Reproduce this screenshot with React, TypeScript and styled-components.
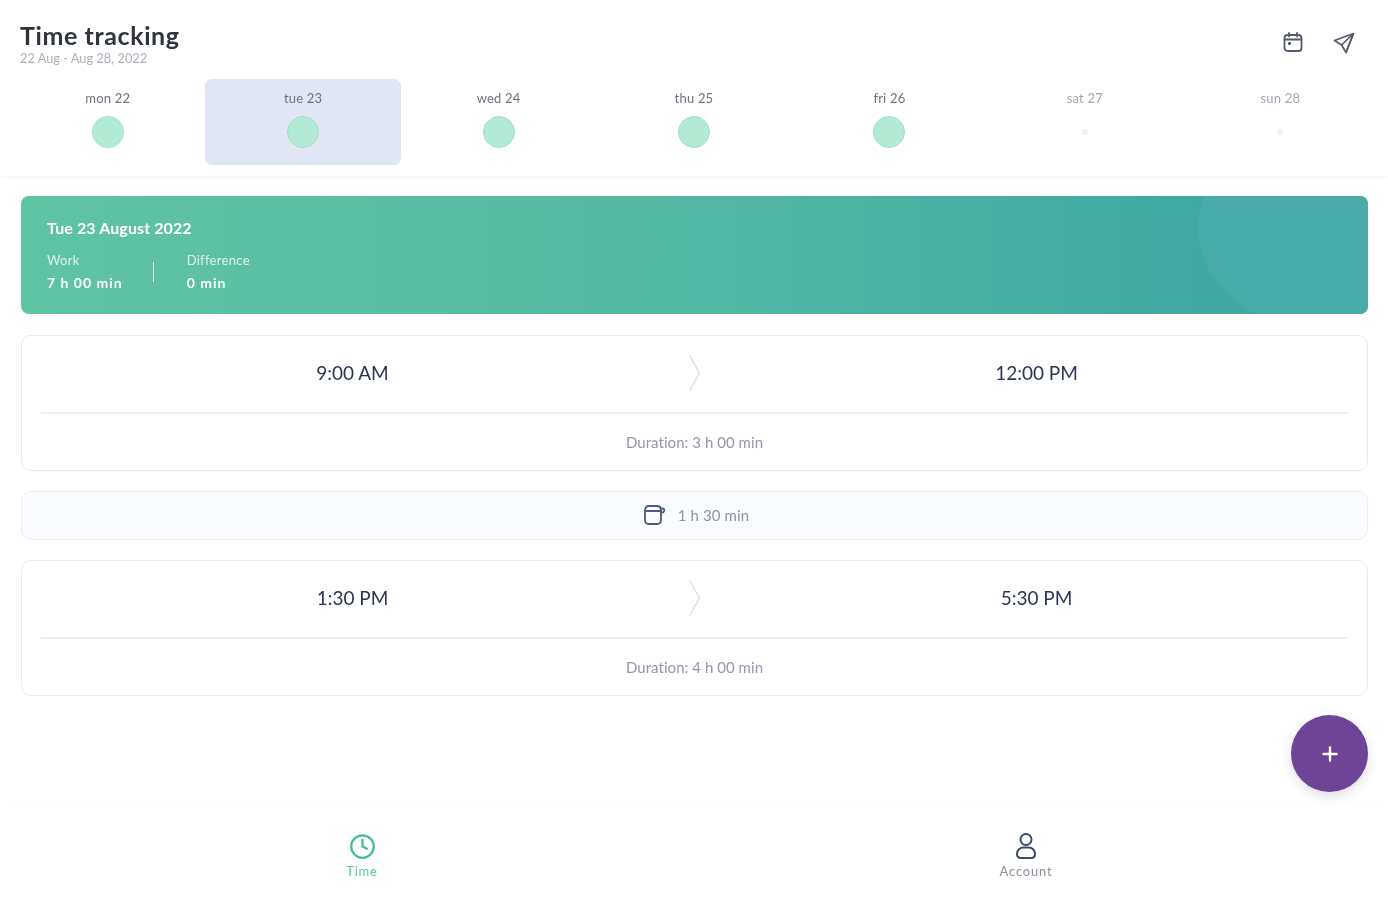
import React from "react";
import styled, { createGlobalStyle } from "styled-components";
import { Clock } from "lucide-react";

const GlobalStyle = createGlobalStyle`
  html, body {
    margin: 0;
    padding: 0;
    background: #ffffff;
    font-family: "Lato", "Noto Sans", sans-serif;
  }
  * {
    box-sizing: border-box;
  }
`;

const Page = styled.div`
  position: relative;
  width: 1388px;
  height: 900px;
  display: flex;
  flex-direction: column;
  overflow: hidden;
  background: #ffffff;
  filter: blur(0.6px);
`;

const Header = styled.header`
  height: 177px;
  padding: 19px 10px 0;
  border-bottom: 1px solid #f7f7f8;
  box-shadow: 0 2px 4px rgba(40, 50, 90, 0.025);
`;

const TitleRow = styled.div`
  height: 60px;
  padding: 0 22px 0 10px;
  display: flex;
  justify-content: space-between;
`;

const TitleBlock = styled.div`
  display: flex;
  flex-direction: column;
`;

const Title = styled.h1`
  margin: 0;
  font-size: 25px;
  line-height: 32px;
  font-weight: 700;
  letter-spacing: 0.6px;
  color: #2f333e;
`;

const DateRange = styled.div`
  font-size: 12.8px;
  line-height: 15px;
  color: #adb0ba;
`;

const HeaderActions = styled.div`
  display: flex;
  align-items: flex-start;
  gap: 28px;
  padding-top: 12px;
  color: #555a6a;
`;

const DayRow = styled.div`
  display: grid;
  grid-template-columns: repeat(7, 1fr);
`;

const DayCell = styled.div<{ $active?: boolean }>`
  height: 86px;
  padding-top: 11px;
  display: flex;
  flex-direction: column;
  align-items: center;
  border-radius: 7px;
  background: ${(p) => (p.$active ? "#e0e6f4" : "transparent")};
`;

const DayName = styled.div<{ $muted?: boolean }>`
  font-size: 13px;
  line-height: 16px;
  letter-spacing: 0.2px;
  color: ${(p) => (p.$muted ? "#a3a7b1" : "#6d7280")};
`;

const DotSlot = styled.div`
  height: 33px;
  margin-top: 9px;
  display: flex;
  align-items: center;
  justify-content: center;
`;

const WorkDot = styled.div`
  width: 32px;
  height: 32px;
  border-radius: 50%;
  background: #b3ead6;
  border: 1px solid #9fe0c8;
`;

const EmptyDot = styled.div`
  width: 6px;
  height: 6px;
  border-radius: 50%;
  background: #eff1f4;
`;

const Content = styled.main`
  padding: 19px 20px 0 21px;
  display: flex;
  flex-direction: column;
  gap: 20px;
`;

const SummaryCard = styled.section`
  position: relative;
  height: 118px;
  margin-bottom: 1px;
  padding: 22px 26px;
  border-radius: 8px;
  overflow: hidden;
  color: #ffffff;
  background: linear-gradient(90deg, #5fc4a4 0%, #57bba3 40%, #3fa9a0 88%);

  &::after {
    content: "";
    position: absolute;
    left: 1177px;
    top: -76px;
    width: 290px;
    height: 216px;
    border-radius: 50%;
    background: #48aba8;
  }
`;

const SummaryDate = styled.div`
  font-size: 16px;
  line-height: 20px;
  font-weight: 700;
  letter-spacing: 0.1px;
`;

const Stats = styled.div`
  margin-top: 14px;
  display: flex;
  align-items: center;
`;

const Stat = styled.div`
  display: flex;
  flex-direction: column;
  gap: 6px;
`;

const StatLabel = styled.div`
  font-size: 13px;
  line-height: 16px;
  letter-spacing: 0.3px;
  opacity: 0.8;
`;

const StatValue = styled.div`
  font-size: 14px;
  line-height: 18px;
  font-weight: 700;
  letter-spacing: 1px;
`;

const StatDivider = styled.div`
  width: 1px;
  height: 20px;
  margin: 0 33px 0 30px;
  background: rgba(255, 255, 255, 0.8);
`;

const EntryCard = styled.section`
  height: 136px;
  padding: 0 19px;
  display: flex;
  flex-direction: column;
  border: 1px solid #e8ebf5;
  border-radius: 10px;
  background: #ffffff;
`;

const EntryTimes = styled.div`
  height: 78px;
  padding-bottom: 3px;
  display: grid;
  grid-template-columns: 1fr 61px 1fr;
  align-items: center;
  border-bottom: 2px solid #eceef7;
`;

const TimeText = styled.div`
  text-align: center;
  font-size: 19px;
  color: #2d3554;
`;

const ChevronCell = styled.div`
  display: flex;
  justify-content: center;
`;

const Duration = styled.div`
  flex: 1;
  display: flex;
  align-items: center;
  justify-content: center;
  font-size: 15px;
  letter-spacing: 0.05px;
  color: #9397ad;
`;

const BreakBar = styled.section`
  height: 49px;
  padding: 0 0 2px 2px;
  display: flex;
  align-items: center;
  justify-content: center;
  gap: 12px;
  border: 1px solid #e9edf6;
  border-radius: 10px;
  background: #f9fbfe;
  font-size: 15px;
  letter-spacing: 0.1px;
  color: #8f94aa;
`;

const AddButton = styled.button`
  position: absolute;
  left: 1291px;
  top: 715px;
  width: 77px;
  height: 77px;
  padding: 0;
  border: none;
  border-radius: 50%;
  display: flex;
  align-items: center;
  justify-content: center;
  background: #6e4596;
  box-shadow: 0 4px 12px rgba(60, 40, 90, 0.16);
`;

const BottomNav = styled.nav`
  margin-top: auto;
  height: 95px;
  padding: 0 30px 21px;
  display: grid;
  grid-template-columns: 1fr 1fr;
  box-shadow: 0 -2px 10px rgba(40, 50, 90, 0.012);
`;

const NavItem = styled.div<{ $active?: boolean }>`
  display: flex;
  flex-direction: column;
  align-items: center;
  justify-content: flex-end;
  gap: 4px;
  font-size: 13px;
  line-height: 15px;
  letter-spacing: 0.8px;
  color: ${(p) => (p.$active ? "#57c7a3" : "#8d919e")};
`;

const NavIcon = styled.div<{ $active?: boolean }>`
  height: 28px;
  display: flex;
  align-items: center;
  color: ${(p) => (p.$active ? "#41bd96" : "#3d4a6b")};
`;

const CalendarIcon = () => (
  <svg width="22" height="22" viewBox="0 0 22 22" fill="none" stroke="currentColor" strokeWidth="1.8" strokeLinecap="round">
    <rect x="2.5" y="4" width="17" height="16" rx="3" />
    <path d="M2.5 8.5h17M7 1.8v3.6M15 1.8v3.6" />
    <circle cx="7.5" cy="12.5" r="1.4" fill="#2d3554" stroke="none" />
  </svg>
);

const PlaneIcon = () => (
  <svg width="24" height="24" viewBox="0 0 24 24" fill="none" stroke="currentColor" strokeWidth="1.7" strokeLinejoin="round">
    <path d="M21.5 2.500 2.500 9.500l7 4.500 4.500 7.500 7.500-19Z" />
    <path d="M21.5 2.500 9.500 14M21.5 2.500 14 21.500" />
  </svg>
);

const ChevronIcon = () => (
  <svg width="14" height="38" viewBox="0 0 14 38" fill="none" stroke="#dcdfeb" strokeWidth="1.5" strokeLinecap="round" strokeLinejoin="round">
    <path d="M2 2l9.5 17L2 36" />
  </svg>
);

const CupIcon = () => (
  <svg width="24" height="22" viewBox="0 0 24 22" fill="none" stroke="#4f5a80" strokeWidth="1.8" strokeLinecap="round">
    <path d="M3 6.500C3 3.500 4.500 2 7 2h8c2.500 0 4 1.500 4 4.500V16c0 2.500-1.500 4-4 4H7c-2.500 0-4-1.500-4-4V6.500Z" />
    <path d="M3 7h16" />
    <path d="M19 4.500h1.500c1.200 0 1.800.7 1.800 1.700S21.500 8.500 20.500 8.500H19" />
  </svg>
);

const UserIcon = () => (
  <svg width="24" height="28" viewBox="0 0 24 28" fill="none" stroke="currentColor" strokeWidth="2" strokeLinecap="round">
    <circle cx="12" cy="7.500" r="5.500" />
    <path d="M3 22c0-4 3-6.500 6.500-6.500h5C18 15.500 21 18 21 22c0 2.500-1.500 4-4 4H7c-2.500 0-4-1.500-4-4Z" />
  </svg>
);

const PlusIcon = () => (
  <svg width="18" height="18" viewBox="0 0 18 18" fill="none" stroke="#ffffff" strokeWidth="2.400" strokeLinecap="round">
    <path d="M9 2.500v13M2.500 9h13" />
  </svg>
);

const days = [
  { name: "mon 22", worked: true },
  { name: "tue 23", worked: true, active: true },
  { name: "wed 24", worked: true },
  { name: "thu 25", worked: true },
  { name: "fri 26", worked: true },
  { name: "sat 27", worked: false },
  { name: "sun 28", worked: false },
];

const Entry: React.FC<{ start: string; end: string; duration: string }> = ({ start, end, duration }) => (
  <EntryCard>
    <EntryTimes>
      <TimeText>{start}</TimeText>
      <ChevronCell>
        <ChevronIcon />
      </ChevronCell>
      <TimeText>{end}</TimeText>
    </EntryTimes>
    <Duration>Duration: {duration}</Duration>
  </EntryCard>
);

export default function App() {
  return (
    <Page>
      <GlobalStyle />
      <Header>
        <TitleRow>
          <TitleBlock>
            <Title>Time tracking</Title>
            <DateRange>22 Aug - Aug 28, 2022</DateRange>
          </TitleBlock>
          <HeaderActions>
            <CalendarIcon />
            <PlaneIcon />
          </HeaderActions>
        </TitleRow>
        <DayRow>
          {days.map((d) => (
            <DayCell key={d.name} $active={d.active}>
              <DayName $muted={!d.worked}>{d.name}</DayName>
              <DotSlot>{d.worked ? <WorkDot /> : <EmptyDot />}</DotSlot>
            </DayCell>
          ))}
        </DayRow>
      </Header>
      <Content>
        <SummaryCard>
          <SummaryDate>Tue 23 August 2022</SummaryDate>
          <Stats>
            <Stat>
              <StatLabel>Work</StatLabel>
              <StatValue>7 h 00 min</StatValue>
            </Stat>
            <StatDivider />
            <Stat>
              <StatLabel>Difference</StatLabel>
              <StatValue>0 min</StatValue>
            </Stat>
          </Stats>
        </SummaryCard>
        <Entry start="9:00 AM" end="12:00 PM" duration="3 h 00 min" />
        <BreakBar>
          <CupIcon />
          <span>1 h 30 min</span>
        </BreakBar>
        <Entry start="1:30 PM" end="5:30 PM" duration="4 h 00 min" />
      </Content>
      <AddButton aria-label="Add">
        <PlusIcon />
      </AddButton>
      <BottomNav>
        <NavItem $active>
          <NavIcon $active>
            <Clock size={27} strokeWidth={2} />
          </NavIcon>
          Time
        </NavItem>
        <NavItem>
          <NavIcon>
            <UserIcon />
          </NavIcon>
          Account
        </NavItem>
      </BottomNav>
    </Page>
  );
}
